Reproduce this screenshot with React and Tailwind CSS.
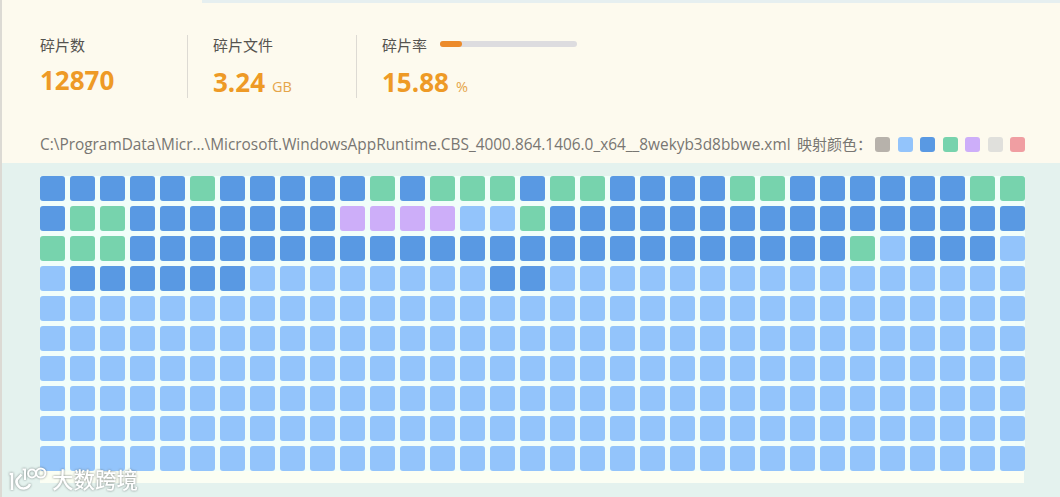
import React from "react";

const colors = {
  K: "bg-[#b7b2ab]",
  L: "bg-[#93c4fb]",
  B: "bg-[#5999e3]",
  G: "bg-[#77d3ad]",
  P: "bg-[#cdaef9]",
  E: "bg-[#e0e0dc]",
  R: "bg-[#f09ea2]",
};

const legend = ["K", "L", "B", "G", "P", "E", "R"];

// one letter per disk block
const rows = [
  "BBBBBGBBBBBGBGGGBGGBBBBGGBBBBBBGG",
  "BGGBBBBBBBPPPPLLGBBBBBBBBBBBBBBBB",
  "GGGBBBBBBBBBBBBBBBBBBBBBBBBGLBBBL",
  "LBBBBBBLLLLLLLLBBLLLLLLLLLLLLLLLL",
  ...Array(6).fill("L".repeat(33)),
];

const Stat = ({ label, value, unit, className, bar }) => (
  <div className={className}>
    <div className="flex h-5 items-center text-[15px] leading-5 text-[#55534f]">
      <span>{label}</span>
      {bar && (
        <div className="mb-[3px] ml-[13px] h-1.5 w-[137px] rounded-full bg-[#dddcdf]">
          <div className="h-1.5 rounded-full bg-[#ec8b2b]" style={{ width: bar }}></div>
        </div>
      )}
    </div>
    <div className={`flex items-baseline text-[#ee9a26] ${unit ? "mt-[9px]" : "mt-[7px]"}`}>
      <span className="text-[26px] font-bold leading-9">{value}</span>
      {unit && <span className="ml-[7px] text-[14.5px] text-[#e5a549]">{unit}</span>}
    </div>
  </div>
);

const Watermark = () => (
  <div className="absolute left-[7px] top-[462px] flex items-center text-white drop-shadow-[0_0_1px_rgba(70,80,80,0.7)]">
    <svg width="38" height="27" viewBox="0 0 38 27" fill="none" stroke="currentColor" strokeWidth="2.6">
      <path d="M.5 9H3V25M12.5 9.500L8 14.500C6 18 10 24 15 23.500C18 23.200 20 21.500 21 19" />
      <path d="M13.500 4.500h2.500V15" strokeWidth="2" />
      <circle cx="23" cy="8.500" r="3.900" strokeWidth="2" />
      <circle cx="31.800" cy="8" r="4.600" strokeWidth="2" />
    </svg>
    <span className="ml-[5px] pt-1 text-[21.5px] font-medium leading-7">大数跨境</span>
  </div>
);

const App = () => {
  return (
    <div className="relative flex h-[497px] w-[1060px] flex-col overflow-hidden border-l-2 border-[#dcdad4] bg-[#e4f2ee] font-['Open_Sans','Noto_Sans_CJK_SC',sans-serif]">
      <div className="h-[163px] shrink-0 bg-[#fdfaee]">
        <div className="ml-[200px] h-[3px] bg-[#e6eff0]"></div>

        {/* Stats */}
        <div className="flex h-[95px] pl-[38px] pt-8">
          <Stat label="碎片数" value="12870" className="w-[147px]" />
          <Stat
            label="碎片文件"
            value="3.24"
            unit="GB"
            className="w-[169px] border-l border-[#dddad3] pl-[25px]"
          />
          <Stat
            label="碎片率"
            value="15.88"
            unit="%"
            bar="15.88%"
            className="border-l border-[#dddad3] pl-[25px]"
          />
        </div>

        {/* Current file and legend */}
        <div className="mt-[34px] flex h-6 items-center justify-between pl-[38px] pr-[35px] text-[15px] leading-6 text-[#787672]">
          <div className="flex items-center whitespace-nowrap">
            <span className="w-[757px] pt-0.5 text-[15.4px]">
              C:\ProgramData\Micr...\Microsoft.WindowsAppRuntime.CBS_4000.864.1406.0_x64__8wekyb3d8bbwe.xml
            </span>
            <span>映射颜色：</span>
          </div>
          <div className="flex gap-[7.5px]">
            {legend.map((item) => (
              <div key={item} className={`size-[15px] rounded-[3px] ${colors[item]}`}></div>
            ))}
          </div>
        </div>
      </div>

      {/* Block map */}
      <div className="ml-[38px] mt-[12.5px] h-[307px] w-[984px] bg-[#fbfef3]">
        <div className="grid w-[985px] grid-cols-[repeat(33,25px)] gap-[5px] bg-[#f1fefa]">
          {rows.map((row, y) =>
            row.split("").map((item, x) => (
              <div key={`${y}-${x}`} className={`h-[25px] rounded-[3px] ${colors[item]}`}></div>
            ))
          )}
        </div>
      </div>

      <Watermark />
    </div>
  );
};

export default App;
